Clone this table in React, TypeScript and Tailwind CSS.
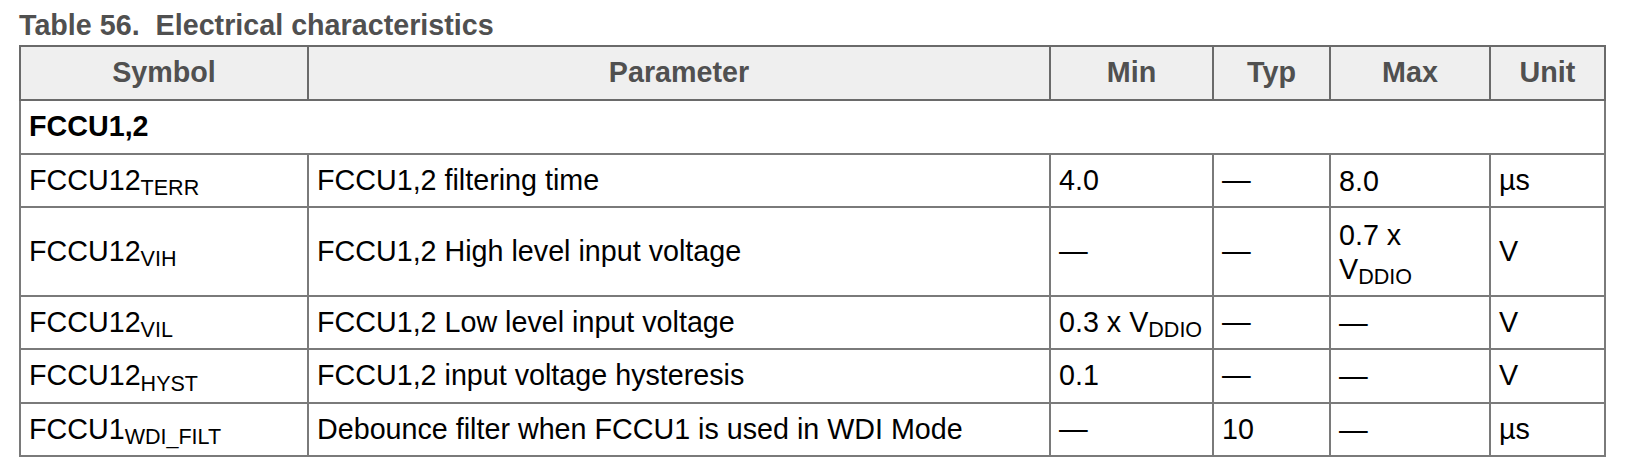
export default function App() {
  const rows = [
    { sym: "FCCU12", sub: "TERR", param: "FCCU1,2 filtering time", min: "4.0", typ: "—", max: "8.0", unit: "µs", h: "h-[53px]" },
    { sym: "FCCU12", sub: "VIH", param: "FCCU1,2 High level input voltage", min: "—", typ: "—", max: "vddio07", unit: "V", h: "h-[89px]" },
    { sym: "FCCU12", sub: "VIL", param: "FCCU1,2 Low level input voltage", min: "vddio03", typ: "—", max: "—", unit: "V", h: "h-[53px]" },
    { sym: "FCCU12", sub: "HYST", param: "FCCU1,2 input voltage hysteresis", min: "0.1", typ: "—", max: "—", unit: "V", h: "h-[54px]" },
    { sym: "FCCU1", sub: "WDI_FILT", param: "Debounce filter when FCCU1 is used in WDI Mode", min: "—", typ: "10", max: "—", unit: "µs", h: "h-[53px]" },
  ];

  const val = (v: string) => {
    if (v === "vddio07")
      return (
        <>
          0.7 x<br />V<sub>DDIO</sub>
        </>
      );
    if (v === "vddio03")
      return (
        <>
          0.3 x V<sub>DDIO</sub>
        </>
      );
    return v;
  };

  const cell = "border-2 border-[#7a7a7a] px-2 align-middle text-left";
  const head = "border-2 border-[#6a6a6a] px-2 text-center font-bold text-[#505050]";

  return (
    <div className="min-h-screen bg-white pl-[19px] pt-[9px] font-['Liberation_Sans',Arial,sans-serif] text-[28.7px] text-black">
      <div className="text-[28.7px] font-bold leading-[32px] text-[#505050]">Table 56.&nbsp; Electrical characteristics</div>
      <table className="mt-[4px] table-fixed border-collapse border-2 border-[#5a5a5a]">
        <colgroup>
          <col className="w-[288px]" />
          <col className="w-[742px]" />
          <col className="w-[163px]" />
          <col className="w-[117px]" />
          <col className="w-[160px]" />
          <col className="w-[115px]" />
        </colgroup>
        <thead>
          <tr className="h-[54px] bg-[#efefef]">
            <th className={head}>Symbol</th>
            <th className={head}>Parameter</th>
            <th className={head}>Min</th>
            <th className={head}>Typ</th>
            <th className={head}>Max</th>
            <th className={head}>Unit</th>
          </tr>
        </thead>
        <tbody>
          <tr className="h-[54px]">
            <td colSpan={6} className={cell + " font-bold"}>FCCU1,2</td>
          </tr>
          {rows.map((r, i) => (
            <tr key={i} className={r.h}>
              <td className={cell}>
                {r.sym}
                <sub>{r.sub}</sub>
              </td>
              <td className={cell}>{r.param}</td>
              <td className={cell}>{val(r.min)}</td>
              <td className={cell}>{val(r.typ)}</td>
              <td className={cell + " leading-[34px]"}>{val(r.max)}</td>
              <td className={cell}>{r.unit}</td>
            </tr>
          ))}
        </tbody>
      </table>
    </div>
  );
}
